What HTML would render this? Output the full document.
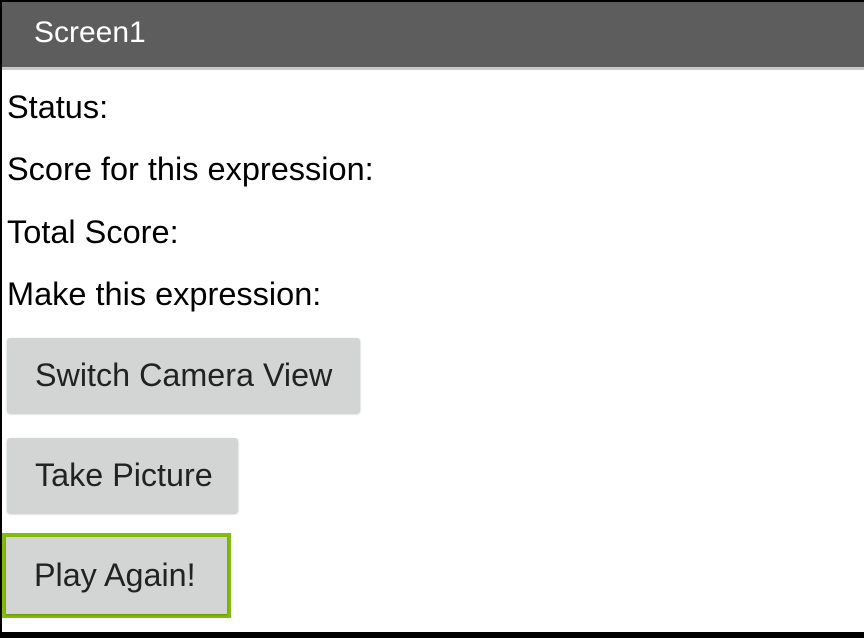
<!DOCTYPE html>
<html><head><style>
body{margin:0;width:864px;height:638px;background:#000;overflow:hidden;font-family:"Liberation Sans",sans-serif;position:relative}
.scr{position:absolute;left:2px;top:2px;width:862px;height:630px;background:#fff}
.hdr{position:absolute;left:0;top:0;width:862px;height:65px;background:#5d5d5d;border-bottom:3px solid #c8c8c8;color:#fff;font-size:30px;line-height:62px;padding-left:32px;box-sizing:content-box}
.t{position:absolute;left:5px;font-size:32.5px;color:#000}
.b{position:absolute;background:#d3d4d4;border-radius:3px;box-shadow:0 1px 2px rgba(0,0,0,.25);font-size:32.3px;color:#222;text-align:left;padding-left:28px;box-sizing:border-box}
</style></head><body>
<div class="scr">
<div class="hdr">Screen1</div>
<div class="t" style="top:87px">Status:</div>
<div class="t" style="top:149px">Score for this expression:</div>
<div class="t" style="top:212px">Total Score:</div>
<div class="t" style="top:274px">Make this expression:</div>
<div class="b" style="left:5px;top:336px;width:353px;height:75px;line-height:75px">Switch Camera View</div>
<div class="b" style="left:5px;top:436px;width:231px;height:75px;line-height:75px">Take Picture</div>
<div style="position:absolute;left:0;top:531px;width:229px;height:85px;border:4px solid #84bb0d;box-sizing:border-box"></div>
<div class="b" style="left:4px;top:535px;width:221px;height:77px;line-height:77px;border-radius:0">Play Again!</div>
</div>
</body></html>
